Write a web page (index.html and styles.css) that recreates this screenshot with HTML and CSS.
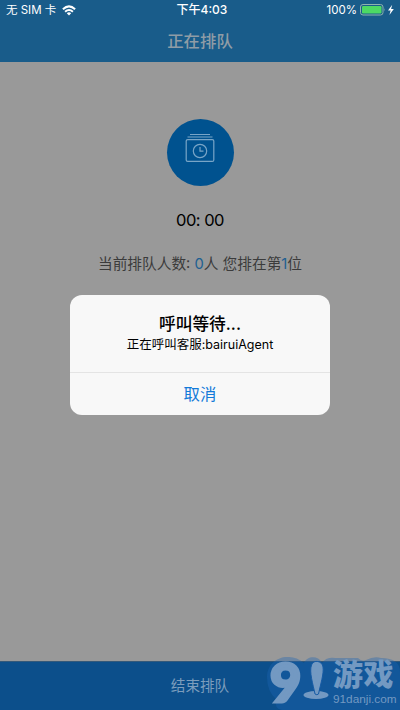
FILE: index.html
```html
<!DOCTYPE html>
<html lang="zh-CN">
<head>
<meta charset="utf-8">
<title>正在排队</title>
<link rel="stylesheet" href="styles.css">
</head>
<body>
<div class="screen">
  <header class="top">
    <div class="status">
      <div class="carrier"><span>无 SIM 卡</span>
        <svg class="wifi" width="14" height="11" viewBox="0 0 14 11"><g fill="none" stroke="#fff" stroke-width="2"><path d="M.9 4.3Q7-1.5 13.1 4.3"/><path d="M3.1 6.8Q7 3.2 10.9 6.8"/></g><path fill="#fff" d="M4.8 8.2Q7 6.5 9.2 8.2L7 10.5z"/></svg>
      </div>
      <div class="clock">下午4:03</div>
      <div class="power"><span>100%</span>
        <svg width="36" height="12" viewBox="0 0 36 12"><rect x=".5" y=".5" width="22.5" height="10.5" rx="2.5" fill="none" stroke="#8eb4ae"/><rect x="2" y="2" width="19.5" height="7.5" rx="1.2" fill="#4cd964"/><path d="M24.3 4q1.2 1.7 0 3.5z" fill="#8eb4ae"/><path d="M32.2.8 28 6.5h2.6L29.4 11l4.4-6h-2.7z" fill="#fff"/></svg>
      </div>
    </div>
    <h1>正在排队</h1>
  </header>
  <main>
    <div class="badge">
      <svg width="30" height="30" viewBox="0 0 30 30" fill="none" stroke="#78a5c7" stroke-width="1.2"><path d="M5 1.5h20M2.5 4h25"/><rect x="1.2" y="6.6" width="27.6" height="21.8" rx="1.5"/><circle cx="15" cy="18" r="6.7"/><path d="M15 14v4.2h3.5"/></svg>
    </div>
    <div class="timer">00: 00</div>
    <p class="queue">当前排队人数: <b>0</b>人 您排在第<b>1</b>位</p>
  </main>
  <footer>结束排队</footer>
  <section class="dialog">
    <div class="message"><h2>呼叫等待...</h2><p>正在呼叫客服:bairuiAgent</p></div>
    <div class="cancel">取消</div>
  </section>
  <div class="watermark">
    <svg class="glow" width="134" height="55" viewBox="0 0 134 55"><path d="M1 22C1 9 12 1 23 2q8 0 15 6C41 1 52 0 56 8q4-6 13-5h23q4 4 8 2 8-4 15-2 19 0 19 14v38H16Q8 54 10 44 1 36 1 22z"/></svg>
    <div class="logo"><span>9</span>
      <svg width="28" height="46" viewBox="0 0 28 46"><ellipse class="face" cx="13" cy="37" rx="12.5" ry="4"/><path class="stick" d="M12 36C10 26 6 14 8.500 7c2-6 11-4 11.500 2C21 16 17.500 26 15.500 36q-1.500 1.500-3.500 0z"/></svg>
    </div>
    <div class="site"><span class="name">游戏</span><span class="url">91danji.com</span></div>
  </div>
</div>
</body>
</html>
```
FILE: styles.css
```css
* { box-sizing: border-box; margin: 0; padding: 0; }
body { font-family: Inter, "Noto Sans CJK SC", sans-serif; }
svg { display: block; }
.screen { position: relative; width: 400px; height: 710px; overflow: hidden; background: #999; display: flex; flex-direction: column; }
.top { height: 62px; background: #195c8a; }
.status { height: 20px; padding: 0 4px 0 6px; display: grid; grid-template-columns: 1fr auto 1fr; align-items: center; color: #fff; font-size: 11.5px; line-height: 20px; }
.carrier, .power { display: flex; align-items: center; gap: 6px; white-space: nowrap; }
.power { justify-content: flex-end; gap: 3px; }
.clock { font-weight: 500; font-size: 12px; padding-left: 2px; }
h1 { font-size: 16.4px; font-weight: 500; line-height: 24px; text-align: center; color: #8f9ca6; padding-top: 9px; }
main { flex: 1; display: flex; flex-direction: column; align-items: center; padding-top: 57px; }
.badge { width: 67px; height: 67px; border-radius: 50%; background: #00528f; display: flex; justify-content: center; padding-top: 14px; }
.timer { margin-top: 22px; font-size: 16.5px; letter-spacing: -.5px; line-height: 24px; color: #000; }
.queue { margin-top: 21px; font-size: 14.7px; line-height: 22px; color: #3b3b3b; white-space: nowrap; }
.queue b { font-weight: 400; color: #205f91; }
footer { height: 49px; background: #0c4f8b; border-top: 1px solid #34597a; color: #7c9dbd; text-align: center; font-size: 14.6px; line-height: 48px; }
.dialog { position: absolute; left: 70px; top: 295px; width: 260px; height: 120px; border-radius: 12px; background: #f8f8f8; text-align: center; }
.message { height: 78px; padding-top: 17px; border-bottom: 1px solid #e4e4e4; }
h2 { font-size: 16.7px; font-weight: 500; line-height: 24px; color: #000; }
.message p { font-size: 12.5px; line-height: 18px; color: #000; }
.cancel { font-size: 16.4px; line-height: 42px; color: #137ad8; }
.watermark { position: absolute; left: 266px; top: 655px; width: 134px; height: 55px; display: flex; }
.glow { position: absolute; left: 0; top: 0; fill: rgba(28, 101, 178, .38); }
.logo { position: relative; display: flex; width: 67px; padding-left: 4px; }
.logo span { width: 33px; font: 900 54px/53px Lato, sans-serif; color: #7399c2; -webkit-text-stroke: 3px #7399c2; }
.logo svg { margin-top: 3px; overflow: visible; flex: none; }
.face { fill: #7399c2; }
.stick { fill: #7399c2; stroke: #165ba5; stroke-width: 1px; }
.site { position: relative; display: flex; flex-direction: column; color: #7399c2; }
.name { height: 38px; font-weight: 900; font-size: 30px; line-height: 39px; letter-spacing: .5px; }
.url { font-family: "Liberation Sans", sans-serif; font-size: 11.8px; line-height: 12px; }
```
